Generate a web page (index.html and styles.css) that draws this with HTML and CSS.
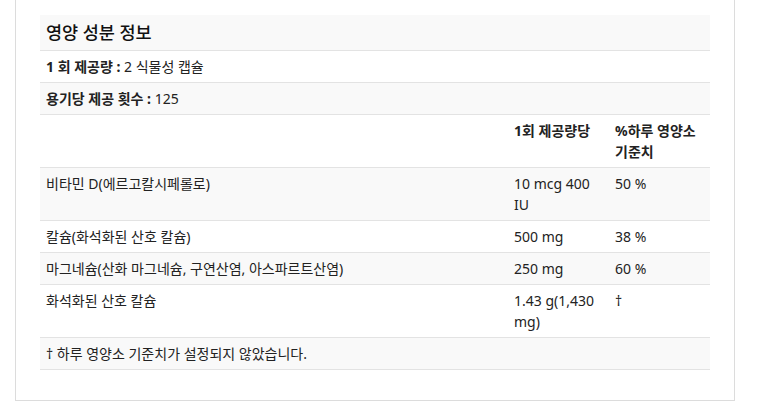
FILE: index.html
```html
<!DOCTYPE html>
<html lang="ko">
<head>
<meta charset="utf-8">
<link rel="stylesheet" href="styles.css">
</head>
<body>
<div class="card">
  <table class="facts">
    <colgroup><col><col class="c2"><col class="c3"></colgroup>
    <tbody>
      <tr class="title-row"><th colspan="3" class="title">영양 성분 정보</th></tr>
      <tr><td colspan="3"><b>1 회 제공량 :</b> 2 식물성 캡슐</td></tr>
      <tr class="alt"><td colspan="3"><b>용기당 제공 횟수 :</b> 125</td></tr>
      <tr><td></td><td class="hd">1회 제공량당</td><td class="hd">%하루 영양소 기준치</td></tr>
      <tr class="alt"><td>비타민 D(에르고칼시페롤로)</td><td>10 mcg 400 IU</td><td>50 %</td></tr>
      <tr><td>칼슘(화석화된 산호 칼슘)</td><td>500 mg</td><td>38 %</td></tr>
      <tr class="alt"><td>마그네슘(산화 마그네슘, 구연산염, 아스파르트산염)</td><td>250 mg</td><td>60 %</td></tr>
      <tr><td>화석화된 산호 칼슘</td><td>1.43 g(1,430 mg)</td><td>†</td></tr>
      <tr class="alt"><td colspan="3">† 하루 영양소 기준치가 설정되지 않았습니다.</td></tr>
    </tbody>
  </table>
</div>
</body>
</html>
```
FILE: styles.css
```css
html, body {
  margin: 0;
  padding: 0;
  background: #fff;
}
body {
  font-family: "Noto Sans", "Noto Sans CJK KR", sans-serif;
  font-size: 14px;
  color: #222;
}
.card {
  margin-left: 15px;
  width: 670px;
  padding: 15px 24px 30px;
  border: 1px solid #dcdcdc;
  border-top: none;
}
.facts {
  width: 670px;
  border-collapse: collapse;
  table-layout: fixed;
}
.c2, .c3 { width: 101px; }
.facts td, .facts th {
  padding: 5px 6px;
  line-height: 21px;
  text-align: left;
  vertical-align: top;
  border-bottom: 1px solid #e3e3e3;
  font-weight: normal;
}
.facts b, .facts .hd { font-weight: 700; }
.title-row th, .alt td { background: #f9f9f9; }
.facts .title {
  font-size: 17.5px;
  font-weight: 500;
  line-height: 25px;
  padding: 5px 6px 5px;
  color: #111;
}
```
